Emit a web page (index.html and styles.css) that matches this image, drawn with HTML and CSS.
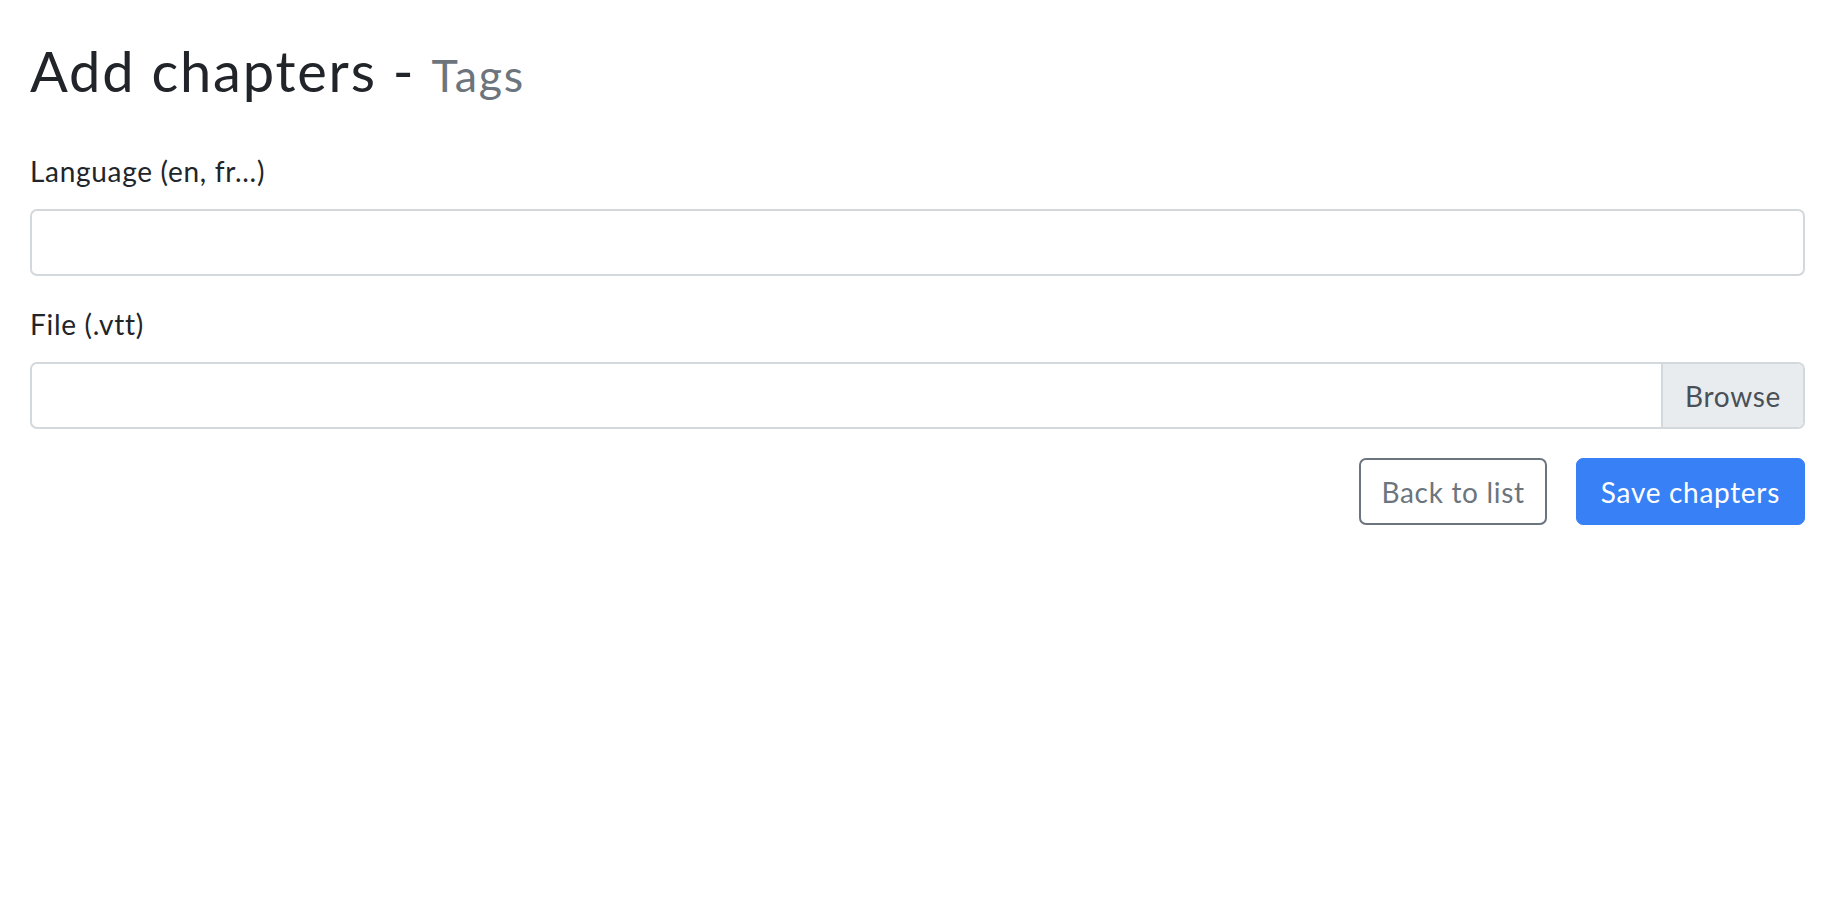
FILE: index.html
```html
<!DOCTYPE html>
<html lang="en">
<head>
<meta charset="utf-8">
<title>Add chapters - Tags</title>
<link rel="stylesheet" href="styles.css">
</head>
<body>
<main class="page">
  <h2 class="title">Add chapters - <small class="muted">Tags</small></h2>
  <form class="form">
    <div class="group group-lang">
      <label class="label" for="lang">Language (en, fr...)</label>
      <input class="control" id="lang" type="text">
    </div>
    <div class="group group-file">
      <label class="label" for="file">File (.vtt)</label>
      <div class="file">
        <span class="file-name"></span>
        <span class="file-browse">Browse</span>
      </div>
    </div>
    <div class="actions">
      <a class="btn btn-outline" href="#">Back to list</a>
      <button class="btn btn-primary" type="button">Save chapters</button>
    </div>
  </form>
</main>
</body>
</html>
```
FILE: styles.css
```css
* { box-sizing: border-box; }
html, body { margin: 0; padding: 0; background: #fff; }
body {
  font-family: "Lato", "Noto Sans", sans-serif;
  color: #212529;
  font-size: 28px;
  letter-spacing: 0.025em;
}
.page {
  padding: 37px 35px 0 30px;
}
.title {
  margin: 0;
  font-size: 56px;
  line-height: 67px;
  font-weight: 400;
  letter-spacing: 0.032em;
}
.muted {
  font-size: 44.8px;
  color: #6c757d;
}
.form { margin-top: 42px; }
.label {
  display: block;
  font-size: 28px;
  line-height: 40px;
  margin-bottom: 18px;
}
.group-file { margin-top: 28px; }
.control {
  display: block;
  width: 100%;
  height: 67px;
  border: 2px solid #d3d8dd;
  border-radius: 7px;
  font: inherit;
  padding: 0 21px;
  background: #fff;
}
.file {
  display: flex;
  height: 67px;
  border: 2px solid #d3d8dd;
  border-radius: 7px;
  overflow: hidden;
}
.file-name { flex: 1; }
.file-browse {
  width: 142px;
  background: #e9ecef;
  border-left: 2px solid #d3d8dd;
  color: #495057;
  display: flex;
  align-items: center;
  justify-content: center;
}
.actions {
  display: flex;
  justify-content: flex-end;
  gap: 29px;
  margin-top: 29px;
}
.btn {
  display: inline-flex;
  align-items: center;
  justify-content: center;
  height: 67px;
  font: inherit;
  font-size: 28px;
  letter-spacing: 0.025em;
  border-radius: 7px;
  text-decoration: none;
  cursor: pointer;
}
.btn-outline {
  padding: 0 20px;
  border: 2px solid #6c757d;
  color: #6c757d;
  background: #fff;
}
.btn-primary {
  padding: 0 24px;
  border: 1px solid #3880f6;
  background: #3880f6;
  color: #fff;
}
```
